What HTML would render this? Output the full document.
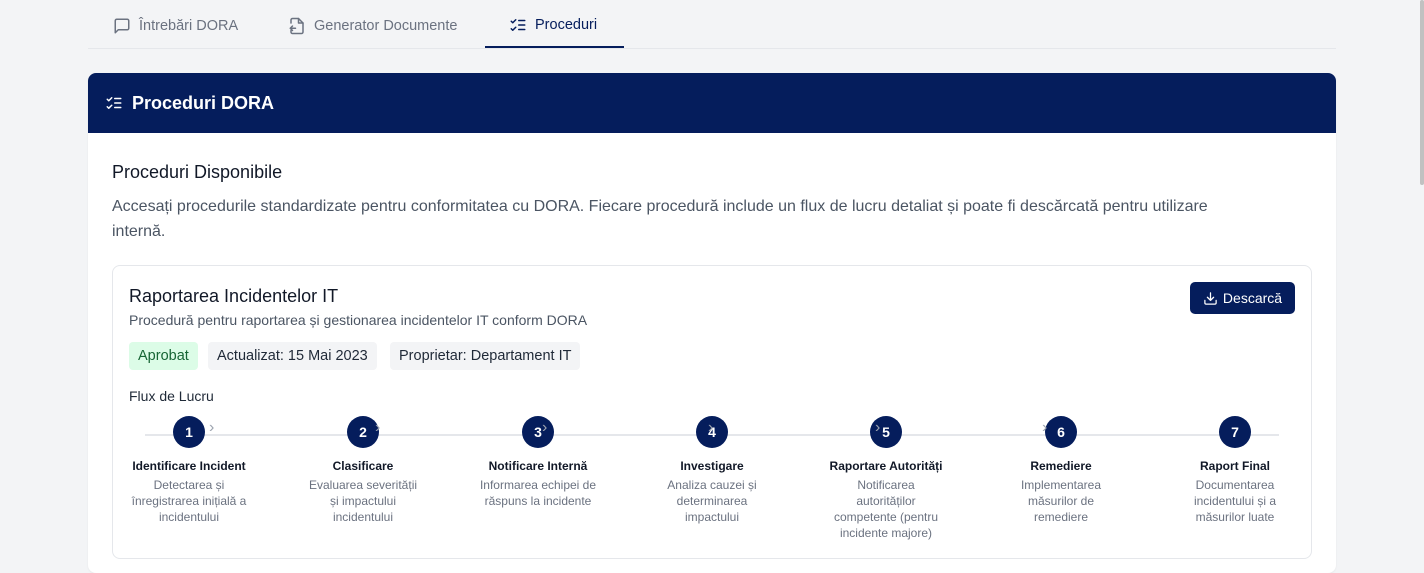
<!DOCTYPE html>
<html><head><meta charset="utf-8"><style>
*{box-sizing:border-box;margin:0;padding:0}
body{width:1424px;height:565px;overflow:hidden;background:#f3f4f6;font-family:"Liberation Sans",sans-serif;position:relative;color:#111827}
.tabs{position:absolute;left:88px;top:0;width:1248px;height:49px;border-bottom:1px solid #e5e7eb}
.tab{position:absolute;top:0;height:48px;padding-top:3px;display:flex;align-items:center;gap:8px;font-size:14.5px;color:#6b7280}
.tab.active{color:#051d5c;border-bottom:2px solid #051d5c}
.card{position:absolute;left:88px;top:73px;width:1248px;height:500px;background:#fff;border-radius:8px;overflow:hidden;box-shadow:0 1px 2px rgba(0,0,0,.05)}
.head{height:60px;background:#051d5c;color:#fff;display:flex;align-items:center;padding-left:17px;gap:9px;font-size:18px;font-weight:bold}
.inner{position:absolute;left:24px;top:192px;width:1200px;height:294px;border:1px solid #e5e7eb;border-radius:8px}
.badge{position:absolute;top:76px;height:28px;line-height:28px;padding:0 9px;border-radius:4px;font-size:14.5px;background:#f3f4f6;color:#1f2937}
.step{position:absolute;top:150px;width:150px;text-align:center}
.c{width:32px;height:32px;border-radius:50%;background:#051d5c;color:#fff;font-weight:bold;font-size:14px;line-height:32px;margin:0 auto}
.t{font-size:12px;font-weight:bold;color:#111827;margin-top:11px;white-space:nowrap}
.d{font-size:12px;color:#6b7280;line-height:16px;margin-top:4px;padding:0 17px}
.ch{position:absolute;top:153px;color:#9ca3af;font-size:16px}
.sb{position:absolute;right:0;top:0;width:4px;height:185px;background:#c1c1c1;border-radius:2px}
</style></head><body>
<div class="tabs">
 <div class="tab" style="left:25px"><svg width="18" height="18" viewBox="0 0 24 24" fill="none" stroke="#6b7280" stroke-width="2" stroke-linejoin="round"><path d="M21 15a2 2 0 0 1-2 2H7l-4 4V5a2 2 0 0 1 2-2h14a2 2 0 0 1 2 2z"/></svg>Întrebări DORA</div>
 <div class="tab" style="left:200px"><svg width="18" height="18" viewBox="0 0 24 24" fill="none" stroke="#6b7280" stroke-width="2" stroke-linecap="round" stroke-linejoin="round"><path d="M4 8V4a2 2 0 0 1 2-2h8l6 6v12a2 2 0 0 1-2 2H6a2 2 0 0 1-2-2v-2"/><path d="M14 2v6h6"/><path d="M10 15H3m3-3-3 3 3 3"/></svg>Generator Documente</div>
 <div class="tab active" style="left:397px;width:139px;padding-left:24px"><svg width="18" height="18" viewBox="0 0 24 24" fill="none" stroke="#051d5c" stroke-width="2" stroke-linecap="round" stroke-linejoin="round"><path d="m3 7 2 2 4-4M3 17l2 2 4-4M13 6h8M13 12h8M13 18h8"/></svg>Proceduri</div>
</div>
<div class="card">
 <div class="head"><svg width="18" height="18" viewBox="0 0 24 24" fill="none" stroke="#fff" stroke-width="2" stroke-linecap="round" stroke-linejoin="round"><path d="m3 7 2 2 4-4M3 17l2 2 4-4M13 6h8M13 12h8M13 18h8"/></svg>Proceduri DORA</div>
 <div style="position:absolute;left:24px;top:89px;font-size:18px;color:#111827">Proceduri Disponibile</div>
 <div style="position:absolute;left:24px;top:121px;width:1130px;font-size:16px;line-height:25px;color:#4b5563">Accesați procedurile standardizate pentru conformitatea cu DORA. Fiecare procedură include un flux de lucru detaliat și poate fi descărcată pentru utilizare internă.</div>
 <div class="inner">
  <div style="position:absolute;left:16px;top:20px;font-size:18px;color:#111827">Raportarea Incidentelor IT</div>
  <div style="position:absolute;left:16px;top:46px;font-size:14px;color:#4b5563">Procedură pentru raportarea și gestionarea incidentelor IT conform DORA</div>
  <div class="badge" style="left:16px;background:#dcfce7;color:#166534">Aprobat</div>
  <div class="badge" style="left:95px">Actualizat: 15 Mai 2023</div>
  <div class="badge" style="left:277px">Proprietar: Departament IT</div>
  <div style="position:absolute;right:16px;top:16px;width:105px;height:32px;background:#051d5c;border-radius:5px;color:#fff;font-size:14px;display:flex;align-items:center;justify-content:center;gap:5px"><svg width="15" height="15" viewBox="0 0 24 24" fill="none" stroke="#fff" stroke-width="2" stroke-linecap="round" stroke-linejoin="round"><path d="M21 15v4a2 2 0 0 1-2 2H5a2 2 0 0 1-2-2v-4M7 10l5 5 5-5M12 15V3"/></svg>Descarcă</div>
  <div style="position:absolute;left:16px;top:122px;font-size:14px;color:#1f2937">Flux de Lucru</div>
  <div style="position:absolute;left:32px;top:168px;width:1134px;height:2px;background:#e5e7eb"></div>
  <div class="step" style="left:1px"><div class="c">1</div><div class="t">Identificare Incident</div><div class="d" style="padding:0 14px">Detectarea și înregistrarea inițială a incidentului</div></div>
  <div class="step" style="left:175px"><div class="c">2</div><div class="t">Clasificare</div><div class="d">Evaluarea severității și impactului incidentului</div></div>
  <div class="step" style="left:350px"><div class="c">3</div><div class="t">Notificare Internă</div><div class="d" style="padding:0 4px">Informarea echipei de răspuns la incidente</div></div>
  <div class="step" style="left:524px"><div class="c">4</div><div class="t">Investigare</div><div class="d">Analiza cauzei și determinarea impactului</div></div>
  <div class="step" style="left:698px"><div class="c">5</div><div class="t">Raportare Autorități</div><div class="d" style="padding:0 22px">Notificarea autorităților competente (pentru incidente majore)</div></div>
  <div class="step" style="left:873px"><div class="c">6</div><div class="t">Remediere</div><div class="d">Implementarea măsurilor de remediere</div></div>
  <div class="step" style="left:1047px"><div class="c">7</div><div class="t">Raport Final</div><div class="d" style="padding:0 14px">Documentarea incidentului și a măsurilor luate</div></div>
  <div class="ch" style="left:96px">›</div><div class="ch" style="left:262px">›</div><div class="ch" style="left:429px">›</div><div class="ch" style="left:595px">›</div><div class="ch" style="left:762px">›</div><div class="ch" style="left:929px">›</div>
 </div>
</div>
<div class="sb"></div>
</body></html>
